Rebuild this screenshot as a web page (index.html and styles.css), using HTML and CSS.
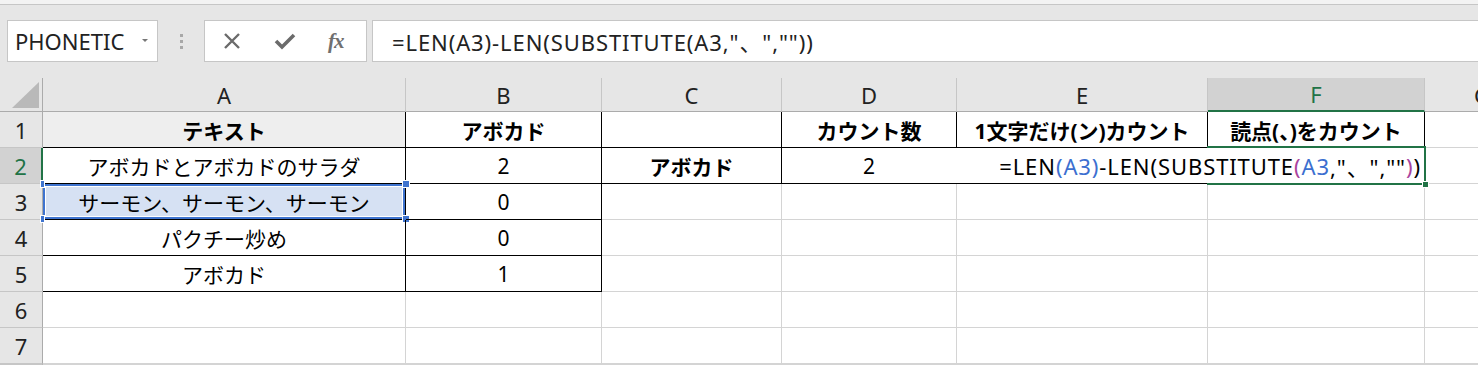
FILE: index.html
```html
<!DOCTYPE html>
<html lang="ja">
<head>
  <meta charset="UTF-8">
  <title>読点をカウント</title>
  <link rel="stylesheet" href="styles.css">
</head>
<body>
  <div class="ribbon-edge"></div>

  <div class="formula-row">
    <div class="namebox">PHONETIC<span class="drop"></span></div>
    <div class="grip"><i></i><i></i><i></i></div>
    <div class="fx-buttons">
      <svg class="btn" width="20" height="20" viewBox="0 0 20 20"><path d="M3 3 L17 17 M17 3 L3 17" stroke="#6b6b6b" stroke-width="2.4" fill="none"/></svg>
      <svg class="btn" width="22" height="20" viewBox="0 0 22 20"><path d="M2 10 L8 16 L20 4" stroke="#6b6b6b" stroke-width="3.6" fill="none"/></svg>
      <span class="fx">fx</span>
    </div>
    <div class="formula">=LEN(A3)-LEN(SUBSTITUTE(A3,"、",""))</div>
  </div>

  <div class="sheet">
    <div class="corner"><svg width="43" height="33" viewBox="0 0 43 33"><polygon points="39,4 39,30 12,30" fill="#b9b9b9"/></svg></div>
    <div class="colhead">A</div>
    <div class="colhead">B</div>
    <div class="colhead">C</div>
    <div class="colhead">D</div>
    <div class="colhead">E</div>
    <div class="colhead active">F</div>
    <div class="colhead">G</div>

    <div class="rowhead">1</div>
    <div class="cell box shade bold">テキスト</div>
    <div class="cell box bold">アボカド</div>
    <div class="cell box"></div>
    <div class="cell box bold">カウント数</div>
    <div class="cell box bold">1文字だけ(ン)カウント</div>
    <div class="cell box bold">読点(、)をカウント</div>
    <div class="cell"></div>

    <div class="rowhead active">2</div>
    <div class="cell box">アボカドとアボカドのサラダ</div>
    <div class="cell box">2</div>
    <div class="cell box bold">アボカド</div>
    <div class="cell box">2</div>
    <div class="cell box"></div>
    <div class="cell box editing">
      <span class="edit-text">=LEN<span class="ref">(A3)</span>-LEN(SUBSTITUTE<span class="paren">(</span><span class="ref">A3</span>,"、",""<span class="paren">)</span>)</span>
      <span class="handle-green"></span>
    </div>
    <div class="cell"></div>

    <div class="rowhead">3</div>
    <div class="cell box selected">サーモン、サーモン、サーモン
      <span class="h tl"></span><span class="h tr"></span><span class="h bl"></span><span class="h br"></span>
    </div>
    <div class="cell box">0</div>
    <div class="cell"></div><div class="cell"></div><div class="cell"></div><div class="cell"></div><div class="cell"></div>

    <div class="rowhead">4</div>
    <div class="cell box">パクチー炒め</div>
    <div class="cell box">0</div>
    <div class="cell"></div><div class="cell"></div><div class="cell"></div><div class="cell"></div><div class="cell"></div>

    <div class="rowhead">5</div>
    <div class="cell box">アボカド</div>
    <div class="cell box">1</div>
    <div class="cell"></div><div class="cell"></div><div class="cell"></div><div class="cell"></div><div class="cell"></div>

    <div class="rowhead">6</div>
    <div class="cell"></div><div class="cell"></div><div class="cell"></div><div class="cell"></div><div class="cell"></div><div class="cell"></div><div class="cell"></div>

    <div class="rowhead">7</div>
    <div class="cell"></div><div class="cell"></div><div class="cell"></div><div class="cell"></div><div class="cell"></div><div class="cell"></div><div class="cell"></div>

    <div class="rowhead"></div>
    <div class="cell"></div><div class="cell"></div><div class="cell"></div><div class="cell"></div><div class="cell"></div><div class="cell"></div><div class="cell"></div>
  </div>
</body>
</html>
```

FILE: styles.css
```css
body {
  margin: 0;
  width: 1478px;
  height: 367px;
  overflow: hidden;
  background: #fff;
  font-family: "Noto Sans", "Noto Sans CJK JP", sans-serif;
  color: #000;
}
.ribbon-edge {
  height: 4px;
  background: #f3f3f3;
  border-bottom: 1px solid #c6c6c6;
}
.formula-row {
  display: flex;
  height: 42px;
  padding: 15px 0 16px 7px;
  background: #e6e6e6;
}
.namebox {
  width: 151px;
  box-sizing: border-box;
  border: 1px solid #c6c6c6;
  background: #fff;
  display: flex;
  align-items: center;
  padding-left: 7px;
  font-size: 22px;
  color: #222;
  position: relative;
}
.drop {
  position: absolute;
  right: 9px;
  top: 18px;
  border-left: 3px solid transparent;
  border-right: 3px solid transparent;
  border-top: 3px solid #777;
}
.grip {
  width: 46px;
  display: flex;
  flex-direction: column;
  align-items: center;
  justify-content: center;
  gap: 3px;
}
.grip i {
  width: 3px;
  height: 3px;
  background: #a8a8a8;
}
.fx-buttons {
  width: 163px;
  box-sizing: border-box;
  border: 1px solid #c6c6c6;
  background: #fff;
  display: flex;
  align-items: center;
  padding-left: 17px;
  gap: 32px;
}
.fx {
  font-family: "Liberation Serif", serif;
  font-style: italic;
  font-weight: bold;
  font-size: 21px;
  color: #707070;
  letter-spacing: -1px;
}
.formula {
  flex: 1;
  margin-left: 5px;
  border: 1px solid #c6c6c6;
  border-right: none;
  background: #fff;
  display: flex;
  align-items: center;
  padding-left: 19px;
  font-size: 22px;
  letter-spacing: 0.9px;
  color: #222;
  white-space: nowrap;
}
.sheet {
  width: 1540px;
  display: grid;
  grid-template-columns: 43px 363px 196px 180px 175px 251px 217px 115px;
  grid-template-rows: 34px repeat(7, 36px);
}
.corner {
  background: #e6e6e6;
  border-right: 1px solid #ababab;
  border-bottom: 1px solid #ababab;
}
.corner svg {
  display: block;
}
.colhead {
  background: #e6e6e6;
  border-right: 1px solid #c6c6c6;
  border-bottom: 1px solid #ababab;
  display: flex;
  align-items: center;
  justify-content: center;
  font-size: 22px;
  color: #222;
}
.colhead.active {
  background: #d2d2d2;
  color: #217346;
  border-bottom: 2px solid #217346;
}
.rowhead {
  background: #e6e6e6;
  border-right: 1px solid #ababab;
  border-bottom: 1px solid #c6c6c6;
  display: flex;
  align-items: center;
  justify-content: center;
  font-size: 22px;
  color: #222;
}
.rowhead.active {
  background: #d2d2d2;
  color: #217346;
  border-right: 2px solid #217346;
}
.cell {
  border-right: 1px solid #d4d4d4;
  border-bottom: 1px solid #d4d4d4;
  display: flex;
  align-items: center;
  justify-content: center;
  font-size: 21px;
  white-space: nowrap;
  position: relative;
}
.cell.box {
  border-right-color: #000;
  border-bottom-color: #000;
}
.shade {
  background: #eeeeee;
}
.bold {
  font-weight: bold;
}
.selected {
  background: #d6e1f3;
  box-shadow: inset 0 0 0 2px #3f74cf, inset 0 0 0 3px #fff;
}
.h {
  position: absolute;
  width: 6px;
  height: 6px;
  background: #3f74cf;
  border: 1px solid #fff;
}
.h.tl { left: -3px; top: -4px; width: 3px; }
.h.bl { left: -3px; bottom: -4px; width: 3px; }
.h.tr { right: -5px; top: -4px; }
.h.br { right: -5px; bottom: -4px; }

.editing::after {
  content: "";
  position: absolute;
  left: -1px;
  top: -2px;
  right: -2px;
  bottom: -2px;
  border: 2px solid #217346;
  border-left: none;
  z-index: 2;
}
.edit-text {
  position: absolute;
  right: 0;
  top: 0;
  bottom: 0;
  padding-left: 46px;
  padding-right: 3px;
  display: flex;
  align-items: center;
  background: #fff;
  font-size: 22px;
  letter-spacing: 0.9px;
  z-index: 1;
}
.ref {
  color: #3c6fd0;
}
.paren {
  color: #a9449e;
}
.handle-green {
  position: absolute;
  right: -5px;
  bottom: -5px;
  width: 5px;
  height: 5px;
  background: #217346;
  border: 1px solid #fff;
  z-index: 3;
}
```
